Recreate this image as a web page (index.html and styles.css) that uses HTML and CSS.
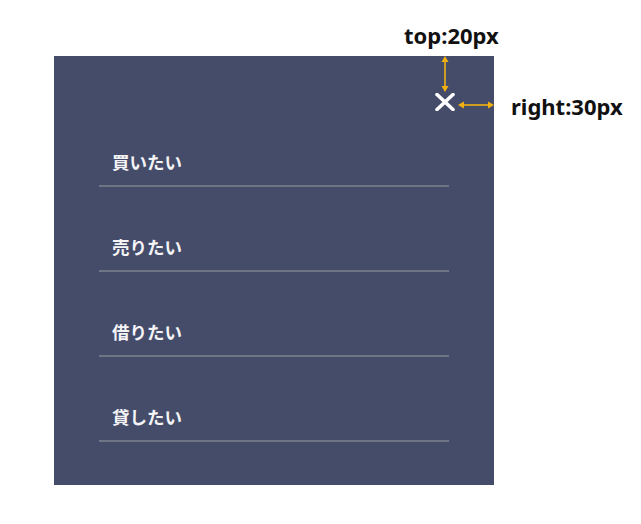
FILE: index.html
```html
<!DOCTYPE html>
<html lang="ja">
<head>
<meta charset="utf-8">
<link rel="stylesheet" href="styles.css">
</head>
<body>
<div class="stage">
  <nav class="drawer">
    <button class="close" aria-label="close">
      <svg width="20" height="18" viewBox="0 0 20 18"><path d="M2 1.5 L18 16.5 M18 1.5 L2 16.5" stroke="#fff" stroke-width="3.6" stroke-linecap="round"/></svg>
    </button>
    <ul class="menu">
      <li class="menu-item">買いたい</li>
      <li class="menu-item">売りたい</li>
      <li class="menu-item">借りたい</li>
      <li class="menu-item">貸したい</li>
    </ul>
  </nav>
  <div class="note note-top">top:20px</div>
  <div class="note note-right">right:30px</div>
  <svg class="arrow arrow-v" width="10" height="36" viewBox="0 0 10 36">
    <path d="M5 3 V33" stroke="#f2b10f" stroke-width="1.6"/>
    <path d="M5 0 L1.5 6 H8.5 Z M5 36 L1.5 30 H8.5 Z" fill="#f2b10f"/>
  </svg>
  <svg class="arrow arrow-h" width="36" height="10" viewBox="0 0 36 10">
    <path d="M3 5 H33" stroke="#f2b10f" stroke-width="1.6"/>
    <path d="M0 5 L6 1.5 V8.5 Z M36 5 L30 1.5 V8.5 Z" fill="#f2b10f"/>
  </svg>
</div>
</body>
</html>
```

FILE: styles.css
```css
html, body {
  margin: 0;
  padding: 0;
  background: #ffffff;
}
.stage {
  position: relative;
  width: 641px;
  height: 524px;
  padding: 56px 0 0 54px;
  box-sizing: border-box;
  font-family: "Noto Sans CJK JP", "Noto Sans", sans-serif;
}
.drawer {
  position: relative;
  width: 440px;
  height: 429px;
  background: #444c6a;
  box-sizing: border-box;
  padding: 46px 45px 0 45px;
}
.close {
  position: absolute;
  top: 37px;
  right: 39px;
  width: 20px;
  height: 18px;
  padding: 0;
  border: 0;
  background: none;
  display: block;
}
.close svg { display: block; }
.menu {
  list-style: none;
  margin: 0;
  padding: 0;
}
.menu-item {
  height: 85px;
  box-sizing: border-box;
  border-bottom: 2px solid #6f7584;
  display: flex;
  align-items: flex-end;
  padding: 0 0 13px 13px;
  color: #f4f4f6;
  font-size: 17.5px;
  font-weight: 700;
  line-height: 20px;
}
.note {
  position: absolute;
  color: #111;
  font-family: "Noto Sans", "Open Sans", sans-serif;
  font-weight: 700;
  font-size: 22px;
  line-height: 26px;
}
.note-top { left: 404px; top: 22px; }
.note-right { left: 511px; top: 93px; }
.arrow { position: absolute; display: block; }
.arrow-v { left: 440px; top: 56px; }
.arrow-h { left: 458px; top: 100px; }
```
